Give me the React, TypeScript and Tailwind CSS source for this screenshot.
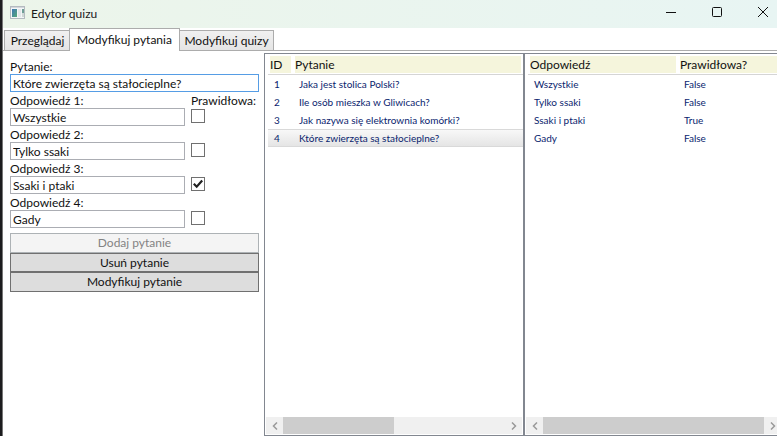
import React, { useState } from "react";

type Answer = { text: string; correct: boolean };

const questions = [
  "Jaka jest stolica Polski?",
  "Ile osób mieszka w Gliwicach?",
  "Jak nazywa się elektrownia komórki?",
  "Które zwierzęta są stałocieplne?",
];

const initialAnswers: Answer[] = [
  { text: "Wszystkie", correct: false },
  { text: "Tylko ssaki", correct: false },
  { text: "Ssaki i ptaki", correct: true },
  { text: "Gady", correct: false },
];

function TitleBar() {
  return (
    <header className="flex h-7 shrink-0 items-center bg-linear-to-r from-[#ecf5ea] to-[#e8f5f3]">
      <svg className="ml-[7px] size-4" viewBox="0 0 16 16" aria-hidden="true">
        <defs>
          <linearGradient id="pane" x1="0" y1="0" x2="1" y2="1">
            <stop offset="0" stopColor="#3f77b5" />
            <stop offset="1" stopColor="#56a878" />
          </linearGradient>
        </defs>
        <rect x="0.5" y="0.5" width="14" height="12" fill="#f4f6f8" stroke="#b4bac0" />
        <rect x="1" y="1" width="13" height="1" fill="#d3d7db" />
        <rect x="2" y="3" width="5" height="8" fill="url(#pane)" />
        <rect x="8" y="3" width="3" height="8" fill="#e3e7ea" />
        <rect x="12" y="3" width="2" height="4" fill="#6f9f97" />
        <rect x="12" y="7" width="2" height="4" fill="#cfd8d6" />
      </svg>
      <h1 className="ml-[5px] flex-1 pb-px text-[12px] leading-4 text-[#1b1b1b]">Edytor quizu</h1>
      <div className="-mr-[9px] flex h-full shrink-0 items-center pb-1">
        <button type="button" aria-label="Minimalizuj" className="flex h-6 w-[46px] items-center justify-center">
          <svg className="size-3" viewBox="0 0 12 12" fill="none" stroke="#111">
            <path d="M1 6.5h10" />
          </svg>
        </button>
        <button type="button" aria-label="Maksymalizuj" className="flex h-6 w-[46px] items-center justify-center">
          <svg className="size-3" viewBox="0 0 12 12" fill="none" stroke="#111">
            <rect x="1.5" y="1.5" width="9" height="9" rx="1" />
          </svg>
        </button>
        <button type="button" aria-label="Zamknij" className="flex h-6 w-[46px] items-center justify-center">
          <svg className="size-3" viewBox="0 0 12 12" fill="none" stroke="#111">
            <path d="M1 1l10 10M11 1L1 11" />
          </svg>
        </button>
      </div>
    </header>
  );
}

function Tabs() {
  const side =
    "mt-0.5 h-[21px] border border-[#acacac] bg-linear-to-b from-[#f0f0f0] to-[#e5e5e5] whitespace-nowrap";
  return (
    <div role="tablist" className="flex h-[23px] shrink-0 border-b border-[#acacac] pl-px">
      <button type="button" role="tab" aria-selected="false" className={`${side} w-[66px] border-r-0`}>
        Przeglądaj
      </button>
      <button
        type="button"
        role="tab"
        aria-selected="true"
        className="-mb-px -ml-px h-[23px] w-[111px] border border-b-0 border-[#acacac] bg-white whitespace-nowrap"
      >
        Modyfikuj pytania
      </button>
      <button type="button" role="tab" aria-selected="false" className={`${side} w-[94px] border-l-0`}>
        Modyfikuj quizy
      </button>
    </div>
  );
}

function AnswerField({ index, answer }: { index: number; answer: Answer }) {
  const [correct, setCorrect] = useState(answer.correct);
  const id = `answer-${index}`;
  return (
    <div className="grid grid-cols-[175px_1fr] gap-x-1.5">
      <label htmlFor={id} className="h-4 leading-[18px]">
        Odpowiedź {index}:
      </label>
      <span className="h-4 leading-[18px]">{index === 1 ? "Prawidłowa:" : ""}</span>
      <input
        id={id}
        type="text"
        defaultValue={answer.text}
        className="h-[18px] w-full border border-[#abadb3] bg-white px-0.5 outline-none"
      />
      <span className="relative mt-px size-3.5">
        <input
          type="checkbox"
          aria-label={`Prawidłowa: odpowiedź ${index}`}
          checked={correct}
          onChange={(e) => setCorrect(e.target.checked)}
          className="block size-3.5 appearance-none border border-[#707070] bg-white"
        />
        {correct && (
          <svg
            className="pointer-events-none absolute inset-0 size-3.5"
            viewBox="0 0 14 14"
            fill="none"
            stroke="#212121"
            strokeWidth="2.2"
          >
            <path d="M2.8 6.800l2.900 2.900 5.500-6.200" />
          </svg>
        )}
      </span>
    </div>
  );
}

function QuestionForm() {
  const action = "flex flex-1 items-center justify-center border border-[#707070] bg-[#dddddd]";
  return (
    <form className="flex w-[249px] shrink-0 flex-col pt-[7px]" onSubmit={(e) => e.preventDefault()}>
      <label htmlFor="question" className="h-4 leading-[18px]">
        Pytanie:
      </label>
      <input
        id="question"
        type="text"
        defaultValue={questions[3]}
        className="h-[18px] border border-[#569de5] bg-white px-0.5 outline-none"
      />
      {initialAnswers.map((answer, i) => (
        <AnswerField key={answer.text} index={i + 1} answer={answer} />
      ))}
      <div className="mt-[5px] flex h-[59px] flex-col">
        <button
          type="button"
          disabled
          className="flex flex-1 items-center justify-center border border-[#adb2b5] bg-[#f4f4f4] text-[#838383]"
        >
          Dodaj pytanie
        </button>
        <button type="button" className={action}>
          Usuń pytanie
        </button>
        <button type="button" className={action}>
          Modyfikuj pytanie
        </button>
      </div>
    </form>
  );
}

function ScrollBar({ children }: { children: React.ReactNode }) {
  return (
    <div className="mx-px mb-px flex h-[17px] shrink-0 bg-[#f0f0f0]">
      <button type="button" aria-label="Przewiń w lewo" className="flex w-[17px] items-center justify-center">
        <svg className="h-2 w-1.5" viewBox="0 0 6 8" fill="none" stroke="#999" strokeWidth="1.5">
          <path d="M5 0.5L1.5 4 5 7.5" />
        </svg>
      </button>
      <div className="flex-1">{children}</div>
      <button type="button" aria-label="Przewiń w prawo" className="flex w-[17px] items-center justify-center">
        <svg className="h-2 w-1.5" viewBox="0 0 6 8" fill="none" stroke="#999" strokeWidth="1.5">
          <path d="M1 0.5L4.5 4 1 7.5" />
        </svg>
      </button>
    </div>
  );
}

function HeaderCell({ children }: { children: React.ReactNode }) {
  return (
    <th scope="col" className="border-b border-[#d5d5d5] px-0.5 py-px font-normal">
      <div className="h-[17px] bg-[#f5f5dc] text-left leading-[18px]">{children}</div>
    </th>
  );
}

function QuestionTable() {
  return (
    <section className="flex w-[260px] shrink-0 flex-col border border-[#828790]">
      <div className="flex-1 overflow-hidden pt-px pl-[3px]">
        <table className="w-full table-fixed border-separate border-spacing-0">
          <colgroup>
            <col className="w-[25px]" />
            <col />
          </colgroup>
          <thead>
            <tr>
              <HeaderCell>ID</HeaderCell>
              <HeaderCell>Pytanie</HeaderCell>
            </tr>
          </thead>
          <tbody className="text-[10px] leading-4 text-[#0a1e6e]">
            {questions.map((q, i) => {
              const cell =
                i === 3
                  ? "border-y border-[#d9d9d9] bg-linear-to-b from-[#f8f8f8] to-[#e5e5e5]"
                  : "border-y border-transparent";
              return (
                <tr key={q} aria-selected={i === 3}>
                  <td className={`${cell} pl-1.5`}>{i + 1}</td>
                  <td className={`${cell} pl-1.5 whitespace-nowrap`}>{q}</td>
                </tr>
              );
            })}
          </tbody>
        </table>
      </div>
      <ScrollBar>
        <div className="h-full w-1/2 bg-[#cdcdcd]" />
      </ScrollBar>
    </section>
  );
}

function AnswerTable() {
  return (
    <section className="-mr-1.5 flex min-w-0 flex-1 flex-col border border-[#828790]">
      <div className="flex-1 overflow-hidden pt-px pl-[3px]">
        <table className="w-full table-fixed border-separate border-spacing-0">
          <colgroup>
            <col className="w-[150px]" />
            <col />
          </colgroup>
          <thead>
            <tr>
              <HeaderCell>Odpowiedź</HeaderCell>
              <HeaderCell>Prawidłowa?</HeaderCell>
            </tr>
          </thead>
          <tbody className="text-[10px] leading-4 text-[#0a1e6e]">
            {initialAnswers.map((a) => (
              <tr key={a.text}>
                <td className="border-y border-transparent pl-1.5">{a.text}</td>
                <td className="border-y border-transparent pl-1.5">{a.correct ? "True" : "False"}</td>
              </tr>
            ))}
          </tbody>
        </table>
      </div>
      <ScrollBar>
        <div className="h-full bg-[#cdcdcd]" />
      </ScrollBar>
    </section>
  );
}

export default function App() {
  return (
    <div className="flex h-screen flex-col overflow-hidden border-l-2 border-[#1c1c1e] bg-white font-['Lato',sans-serif] text-[12px] leading-4 text-[#111]">
      <div className="flex min-h-0 flex-1 flex-col border-l border-[#777]">
        <TitleBar />
        <Tabs />
        <main className="flex min-h-0 flex-1 pl-[7px]">
          <QuestionForm />
          <div className="flex min-w-0 flex-1 pt-0.5 pl-[5px]">
            <QuestionTable />
            <AnswerTable />
          </div>
        </main>
      </div>
    </div>
  );
}
